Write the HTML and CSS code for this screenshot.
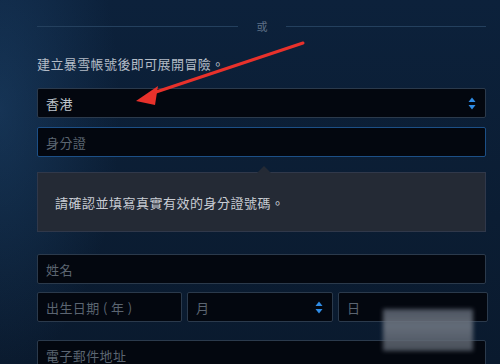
FILE: index.html
```html
<!DOCTYPE html>
<html lang="zh-Hant">
<head>
  <meta charset="UTF-8" />
  <meta name="viewport" content="width=device-width, initial-scale=1" />
  <title>建立暴雪帳號</title>
  <link rel="stylesheet" href="styles.css">
</head>
<body>

  <div class="form">

    <div class="divider">
      <span class="line"></span>
      <span class="or">或</span>
      <span class="line"></span>
    </div>

    <p class="intro">建立暴雪帳號後即可展開冒險。</p>

    <div class="field select">
      <span class="value">香港</span>
      <svg class="updown" width="8" height="13" viewBox="0 0 8 13">
        <path d="M4 0.5 L7.5 5 L0.5 5 Z" fill="#2f8ce6" />
        <path d="M4 12.5 L7.5 8 L0.5 8 Z" fill="#2f8ce6" />
      </svg>
    </div>

    <div class="field focus">
      <span class="placeholder">身分證</span>
    </div>

    <div class="tooltip">
      <span class="notch"></span>
      請確認並填寫真實有效的身分證號碼。
    </div>

    <div class="field name">
      <span class="placeholder">姓名</span>
    </div>

    <div class="dates">
      <div class="field">
        <span class="placeholder">出生日期 ( 年 )</span>
      </div>
      <div class="field select">
        <span class="placeholder">月</span>
        <svg class="updown" width="8" height="13" viewBox="0 0 8 13">
          <path d="M4 0.5 L7.5 5 L0.5 5 Z" fill="#2f8ce6" />
          <path d="M4 12.5 L7.5 8 L0.5 8 Z" fill="#2f8ce6" />
        </svg>
      </div>
      <div class="field">
        <span class="placeholder">日</span>
      </div>
    </div>

    <div class="field email">
      <span class="placeholder">電子郵件地址</span>
    </div>

  </div>

  <!-- flèche rouge ajoutée sur la capture -->
  <svg class="red-arrow" width="500" height="364" viewBox="0 0 500 364">
    <path d="M303 43 L150 94" stroke="#e8312b" stroke-width="3" stroke-linecap="round" />
    <path d="M136 101 L158 86 L155 105 Z" fill="#e8312b" />
  </svg>

  <div class="watermark"></div>

</body>
</html>
```

FILE: styles.css
```css
body {
  margin: 0;
  width: 500px;
  height: 364px;
  overflow: hidden;
  font-family: "Noto Sans CJK TC", "Noto Sans", sans-serif;
  background:
    radial-gradient(ellipse 120px 260px at 0px 110px, rgba(40, 90, 140, 0.35), transparent),
    linear-gradient(180deg, #0c213b 0%, #0b1d33 60%, #0a1a2e 100%);
  color: #b9c0ca;
  position: relative;
}

.form {
  padding: 19px 14px 0 37px;
  display: flex;
  flex-direction: column;
}

.divider {
  display: flex;
  align-items: center;
  height: 14px;
}

.divider .line {
  flex: 1;
  height: 1px;
  background: #24405e;
}

.divider .or {
  font-size: 11px;
  color: #5f7188;
  padding: 0 18px 0 19px;
  line-height: 14px;
}

.intro {
  margin: 23px 0 0 0;
  font-size: 13px;
  line-height: 16px;
  letter-spacing: 0.4px;
  color: #b4bcc7;
}

.field {
  box-sizing: border-box;
  height: 30px;
  background: #03070f;
  border: 1px solid #2b3a4c;
  border-radius: 2px;
  display: flex;
  align-items: center;
  padding: 0 9px 0 8px;
  font-size: 13px;
  letter-spacing: 0.4px;
}

.field.select {
  margin-top: 16px;
  justify-content: space-between;
}

.field .value {
  color: #bfc5cd;
}

.field .placeholder {
  color: #5b6571;
  white-space: pre;
}

.updown {
  display: block;
}

.field.focus {
  margin-top: 9px;
  border-color: #1c4f86;
}

.tooltip {
  position: relative;
  box-sizing: border-box;
  height: 60px;
  margin-top: 15px;
  background: #242a35;
  border: 1px solid #30384a;
  padding: 0 17px;
  display: flex;
  align-items: center;
  font-size: 13px;
  letter-spacing: 0.5px;
  color: #c9cdd4;
}

.notch {
  position: absolute;
  top: -7px;
  left: 219px;
  width: 0;
  height: 0;
  border-left: 7px solid transparent;
  border-right: 7px solid transparent;
  border-bottom: 7px solid #242a35;
}

.field.name {
  margin-top: 22px;
}

.dates {
  margin-top: 8px;
  display: grid;
  grid-template-columns: 145px 146px 150px;
  column-gap: 5px;
}

.dates .field.select {
  margin-top: 0;
}

.field.email {
  margin-top: 18px;
}

.red-arrow {
  position: absolute;
  top: 0;
  left: 0;
  pointer-events: none;
}

.watermark {
  position: absolute;
  left: 383px;
  top: 309px;
  width: 90px;
  height: 42px;
  background: linear-gradient(180deg, #5a6270 0%, #747b86 40%, #555c67 100%);
  filter: blur(2px);
  opacity: 0.85;
}
```
